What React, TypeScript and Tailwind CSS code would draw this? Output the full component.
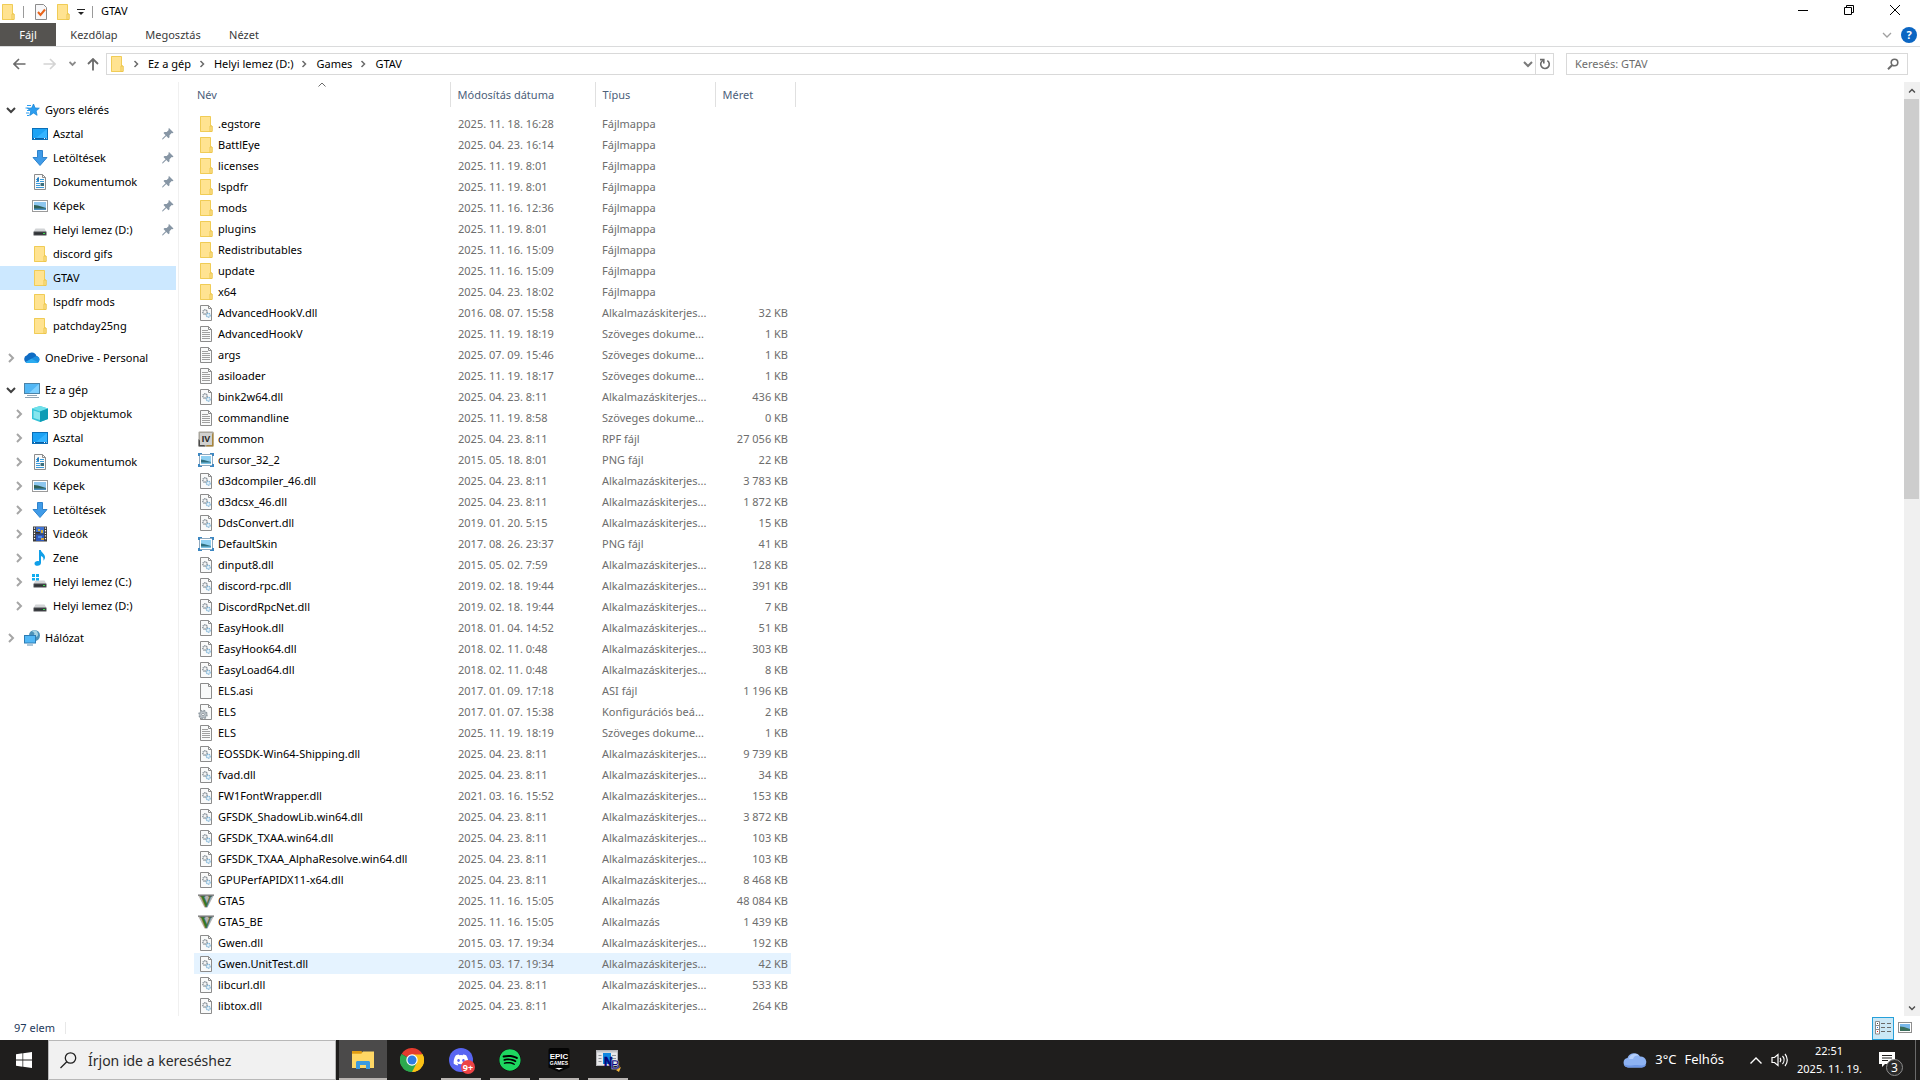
import type { ReactNode } from "react";
import { FaDiscord, FaSpotify } from "react-icons/fa";

type IconProps = { className?: string };

function FolderIcon({ className = "" }: IconProps) {
  return (
    <svg width="16" height="16" viewBox="0 0 16 16" className={className}>
      <path d="M2 0h10.5v16H2z" fill="#ffe391" />
      <path d="M2.5.5h10v9.5h1.500v5.500H2.500z" fill="none" stroke="#f0cc56" />
      <path d="M12 10h2v5.500h-2z" fill="#ffe69b" stroke="#edc64c" />
    </svg>
  );
}

function PageBase({ children }: { children?: ReactNode }) {
  return (
    <svg width="16" height="16" viewBox="0 0 16 16">
      <path d="M2.500.5h8l3 3v12h-11z" fill="#f9fafa" stroke="#8c8c8c" />
      <path d="M10.500.5v3h3" fill="none" stroke="#8c8c8c" />
      {children}
    </svg>
  );
}

function DllIcon() {
  return (
    <PageBase>
      <circle cx="7" cy="7" r="2.300" fill="#d3d7da" stroke="#8b949b" strokeWidth="1.300" strokeDasharray="1.200 .6" />
      <circle cx="7" cy="7" r=".9" fill="#fff" />
      <circle cx="10.300" cy="10.300" r="1.900" fill="#e3f0f8" stroke="#7fb3d6" strokeWidth="1.200" strokeDasharray="1.200 .5" />
    </PageBase>
  );
}

function TextFileIcon() {
  return (
    <PageBase>
      <path d="M4 4.500h6M4 6.500h8M4 8.500h8M4 10.500h8M4 12.500h8" stroke="#a0a0a0" />
    </PageBase>
  );
}

function ConfigIcon() {
  return (
    <svg width="16" height="16" viewBox="0 0 16 16">
      <path d="M2.500.5h8l3 3v12h-11z" fill="#f9fafa" stroke="#8c8c8c" />
      <path d="M10.500.5v3h3" fill="none" stroke="#8c8c8c" />
      <circle cx="5" cy="10.500" r="4" fill="#c3cacf" stroke="#8d979e" strokeWidth="1.500" strokeDasharray="1.700 1.440" />
      <circle cx="5" cy="10.500" r="3.200" fill="#c3cacf" stroke="#98a2a9" strokeWidth=".7" />
      <circle cx="5" cy="10.500" r="1.300" fill="#fff" stroke="#7f8990" strokeWidth=".8" />
    </svg>
  );
}

function RpfIcon() {
  return (
    <svg width="16" height="16" viewBox="0 0 16 16">
      <rect x="0.500" y="0.500" width="15" height="15" rx="1" fill="#a9a69d" />
      <path d="M15.500 1v14.500H8z" fill="#a8853c" />
      <path d="M.5 15.500V8l7 7.500z" fill="#4a4a4a" />
      <rect x="2" y="2" width="12" height="12" fill="#d0d0ce" />
      <text x="8" y="11" textAnchor="middle" fontSize="9" fontWeight="700" fill="#222" fontFamily="Liberation Sans, sans-serif">
        IV
      </text>
    </svg>
  );
}

function PngIcon() {
  return (
    <svg width="16" height="16" viewBox="0 0 16 16">
      <rect x="1.500" y="2.500" width="13" height="11" fill="#fff" stroke="#8fa9bf" />
      <rect x="3" y="4" width="10" height="8" fill="#8fd0f2" />
      <path d="M3 7.500l3 .5 7 2v1H3z" fill="#2f6f80" />
      <path d="M3 10.500h10V12H3z" fill="#7cc3e6" />
      <path d="M0 1h4v1H2v2H0zM12 1h4v3h-2V2h-2zM0 12h2v2h2v1H0zM14 12h2v3h-4v-1h2z" fill="#3c87c2" />
    </svg>
  );
}

function GtaIcon() {
  return (
    <svg width="16" height="16" viewBox="0 0 16 16">
      <path d="M0 2h16L9.500 14.500h-3z" fill="#b4b4b4" />
      <path d="M0 1.500h16v1.200H0z" fill="#6f6f6f" />
      <text x="8" y="14" textAnchor="middle" fontSize="16" fontWeight="700" fill="#2f7d1e" stroke="#5a5a5a" strokeWidth=".4" fontFamily="Liberation Serif, serif">
        V
      </text>
    </svg>
  );
}

function DesktopIcon() {
  return (
    <svg width="16" height="16" viewBox="0 0 16 16">
      <rect x="0.500" y="2.500" width="15" height="11" fill="#1da3f5" stroke="#0a6fb8" />
      <path d="M15 3v9L4 12z" fill="#35b4ff" />
      <path d="M1 12.500h14" stroke="#0b5fa5" />
      <path d="M2 12.500h1M12 12.500h1M14 12.500h.6" stroke="#fff" />
    </svg>
  );
}

function DownloadIcon() {
  return (
    <svg width="16" height="16" viewBox="0 0 16 16">
      <path d="M5.500.5h5v7h4.500L8 15.500 1 7.500h4.500z" fill="#3f9be8" stroke="#2f83cc" />
    </svg>
  );
}

function DocumentsIcon() {
  return (
    <PageBase>
      <path d="M4 5.500h3M4 7.500h3M8 5.500h4M8 7.500h4M4 9.500h4M4 11.500h4M4 13.500h8" stroke="#3b9bdc" />
      <path d="M5 4l2-1v4H5z" fill="#2a7fbe" />
      <path d="M8.500 9h3.500v3H8.500z" fill="#3d6f7d" />
    </PageBase>
  );
}

function PicturesIcon() {
  return (
    <svg width="16" height="16" viewBox="0 0 16 16">
      <rect x="0.500" y="2.500" width="15" height="11" fill="#fff" stroke="#9b9b9b" />
      <rect x="2" y="4" width="12" height="8" fill="#8ec7ef" />
      <path d="M2 7l4 .5 8 2.500v2H2z" fill="#2e6057" />
      <path d="M2 10.500l12 0V12H2z" fill="#4b8fc0" />
    </svg>
  );
}

function DriveIcon({ system = false }: { system?: boolean }) {
  return (
    <svg width="16" height="16" viewBox="0 0 16 16">
      <path d="M3.500 6.500h9l2 3.500h-13z" fill="#d2d4d6" />
      <rect x="1.500" y="9.500" width="13" height="4" rx="0.500" fill="#4a4d50" />
      <rect x="2.500" y="10.500" width="11" height="2" fill="#303336" />
      <rect x="11" y="11" width="2" height="1" fill="#39e04b" />
      {system && <path d="M0 0h3v3H0zM4 0h3v3H4zM0 4h3v2.500H0zM4 4h3v2.500H4z" fill="#12adef" />}
    </svg>
  );
}

function VideosIcon() {
  return (
    <svg width="16" height="16" viewBox="0 0 16 16">
      <rect x="1" y="0.500" width="14" height="15" fill="#3d3d3d" />
      <path d="M2.500 1.500v13M13.500 1.500v13" stroke="#fff" strokeWidth="1.200" strokeDasharray="1.300 1.300" />
      <rect x="4" y="1" width="8" height="6.500" fill="#3f72d2" />
      <path d="M6 3h2v2H6zM9 4h2v3H9z" fill="#d6b23a" />
      <path d="M4 6h4v1.500H4z" fill="#3a3020" />
      <rect x="4" y="8.500" width="8" height="6.500" fill="#2e57b8" />
      <path d="M6 10h4v2H6z" fill="#4f8ae6" />
      <path d="M9 12h3v2H9z" fill="#d5a13b" />
    </svg>
  );
}

function MusicIcon() {
  return (
    <svg width="16" height="16" viewBox="0 0 16 16">
      <path d="M7 0h1.800c.4 2.600 4.400 4 4.200 7.500-.1 1.400-.8 2.500-1.600 3.200.5-2.300-.3-3.900-2.400-4.700v6.800c0 1.800-1.400 3-3.400 3S2.500 14.900 2.500 13.500 4 11 5.600 11c.5 0 1 .1 1.400.300z" fill="#109fe8" />
    </svg>
  );
}

function CubeIcon() {
  return (
    <svg width="16" height="16" viewBox="0 0 16 16">
      <path d="M8 0l8 2.500v10.500L8 16 0 13V2.500z" fill="#35c3d8" />
      <path d="M0 2.500L8 0l8 2.500L8 5.500z" fill="#6fe0ea" />
      <path d="M8 5.500l8-3v10.500L8 16z" fill="#0d9cb5" />
      <path d="M1.500 4.500L8 6.500V14l-6.500-2z" fill="#86e6ee" />
    </svg>
  );
}

function PcIcon() {
  return (
    <svg width="16" height="16" viewBox="0 0 16 16">
      <rect x="0.500" y="1.500" width="15" height="10" fill="#52b7f5" stroke="#4b83a8" />
      <path d="M15 2v9H5z" fill="#7ed0ff" />
      <path d="M3 13.500h10M1 15.500h14" stroke="#8fa3b3" />
    </svg>
  );
}

function NetworkIcon() {
  return (
    <svg width="16" height="16" viewBox="0 0 16 16">
      <circle cx="10.500" cy="5.500" r="5.500" fill="#4d92b8" />
      <path d="M8 1.500c2 .5 3 2 2 3.500s2 2 3 1.500 1.500-3 0-5-4-1.500-5 0z" fill="#a8d4e4" />
      <rect x="0.500" y="5.500" width="11" height="7.500" fill="#52b7f5" stroke="#2d7cb4" />
      <path d="M3 15h6" stroke="#5b8fb3" />
    </svg>
  );
}

function OneDriveIcon() {
  return (
    <svg width="16" height="16" viewBox="0 0 16 16">
      <path d="M4 13a4 4 0 0 1-1-7.800A5.200 5.200 0 0 1 12.500 6 3.600 3.600 0 0 1 12.500 13z" fill="#0f6cc4" />
      <path d="M4 13l-2.500-1L9.500 7.500c1-.7 2.200-1.500 3.500-1.300a3.500 3.500 0 0 1 0 6.800z" fill="#1b8fe0" />
      <path d="M1.500 12l6-3.200 7 3.600c-.5.500-1 .6-2 .600H4c-1 0-2-.3-2.500-1z" fill="#2cacf0" />
    </svg>
  );
}

function QuickAccessIcon() {
  return (
    <svg width="16" height="16" viewBox="0 0 16 16">
      <path d="M9.500 2l1.600 4 4.200.2-3.200 2.800 1 4.300L9.500 11l-3.800 2.500 1-4.400L3.500 6.300l4.200-.3z" fill="#2b9df0" stroke="#1b86d6" strokeWidth=".8" />
      <path d="M3 3.500h4M1.500 6h3M3 8.500h3M2 11h3M3 13.500h2" stroke="#2b9df0" />
    </svg>
  );
}

function PinIcon() {
  return (
    <svg width="12" height="12" viewBox="0 0 12 12" className="mr-[2px] ml-auto">
      <path d="M7 0l4.500 4.500-1 .8-.8-.2L7.500 7.300l0 2-1 1L4.300 8 1 11.200 0 11.500l.5-1.200L3.600 7.200 1.500 5l1-1 2.200 0 2-2L6.400 1z" fill="#8796a5" />
    </svg>
  );
}

function Chevron({ dir, className = "" }: { dir: "right" | "down" | "up"; className?: string }) {
  const d = dir === "right" ? "M3 1l4 4-4 4" : dir === "down" ? "M1 3l4 4 4-4" : "M1 7l4-4 4 4";
  return (
    <svg width="10" height="10" viewBox="0 0 10 10" className={className}>
      <path d={d} fill="none" stroke="currentColor" strokeWidth="2" />
    </svg>
  );
}

type NavItem = { label: string; icon: ReactNode; pinned?: boolean; selected?: boolean };
type NavGroup = NavItem & { open: boolean; items: NavItem[]; expandable?: boolean };

const navGroups: NavGroup[] = [
  {
    label: "Gyors elérés",
    icon: <QuickAccessIcon />,
    open: true,
    items: [
      { label: "Asztal", icon: <DesktopIcon />, pinned: true },
      { label: "Letöltések", icon: <DownloadIcon />, pinned: true },
      { label: "Dokumentumok", icon: <DocumentsIcon />, pinned: true },
      { label: "Képek", icon: <PicturesIcon />, pinned: true },
      { label: "Helyi lemez (D:)", icon: <DriveIcon />, pinned: true },
      { label: "discord gifs", icon: <FolderIcon /> },
      { label: "GTAV", icon: <FolderIcon />, selected: true },
      { label: "lspdfr mods", icon: <FolderIcon /> },
      { label: "patchday25ng", icon: <FolderIcon /> },
    ],
  },
  { label: "OneDrive - Personal", icon: <OneDriveIcon />, open: false, items: [] },
  {
    label: "Ez a gép",
    icon: <PcIcon />,
    open: true,
    expandable: true,
    items: [
      { label: "3D objektumok", icon: <CubeIcon /> },
      { label: "Asztal", icon: <DesktopIcon /> },
      { label: "Dokumentumok", icon: <DocumentsIcon /> },
      { label: "Képek", icon: <PicturesIcon /> },
      { label: "Letöltések", icon: <DownloadIcon /> },
      { label: "Videók", icon: <VideosIcon /> },
      { label: "Zene", icon: <MusicIcon /> },
      { label: "Helyi lemez (C:)", icon: <DriveIcon system /> },
      { label: "Helyi lemez (D:)", icon: <DriveIcon /> },
    ],
  },
  { label: "Hálózat", icon: <NetworkIcon />, open: false, items: [] },
];

type Kind = "folder" | "dll" | "txt" | "rpf" | "png" | "asi" | "ini" | "exe";

const kinds: Record<Kind, { icon: ReactNode; type: string }> = {
  folder: { icon: <FolderIcon />, type: "Fájlmappa" },
  dll: { icon: <DllIcon />, type: "Alkalmazáskiterjes..." },
  txt: { icon: <TextFileIcon />, type: "Szöveges dokume..." },
  rpf: { icon: <RpfIcon />, type: "RPF fájl" },
  png: { icon: <PngIcon />, type: "PNG fájl" },
  asi: { icon: <PageBase />, type: "ASI fájl" },
  ini: { icon: <ConfigIcon />, type: "Konfigurációs beá..." },
  exe: { icon: <GtaIcon />, type: "Alkalmazás" },
};

const files: [string, string, Kind, string][] = [
  [".egstore", "2025. 11. 18. 16:28", "folder", ""],
  ["BattlEye", "2025. 04. 23. 16:14", "folder", ""],
  ["licenses", "2025. 11. 19. 8:01", "folder", ""],
  ["lspdfr", "2025. 11. 19. 8:01", "folder", ""],
  ["mods", "2025. 11. 16. 12:36", "folder", ""],
  ["plugins", "2025. 11. 19. 8:01", "folder", ""],
  ["Redistributables", "2025. 11. 16. 15:09", "folder", ""],
  ["update", "2025. 11. 16. 15:09", "folder", ""],
  ["x64", "2025. 04. 23. 18:02", "folder", ""],
  ["AdvancedHookV.dll", "2016. 08. 07. 15:58", "dll", "32 KB"],
  ["AdvancedHookV", "2025. 11. 19. 18:19", "txt", "1 KB"],
  ["args", "2025. 07. 09. 15:46", "txt", "1 KB"],
  ["asiloader", "2025. 11. 19. 18:17", "txt", "1 KB"],
  ["bink2w64.dll", "2025. 04. 23. 8:11", "dll", "436 KB"],
  ["commandline", "2025. 11. 19. 8:58", "txt", "0 KB"],
  ["common", "2025. 04. 23. 8:11", "rpf", "27 056 KB"],
  ["cursor_32_2", "2015. 05. 18. 8:01", "png", "22 KB"],
  ["d3dcompiler_46.dll", "2025. 04. 23. 8:11", "dll", "3 783 KB"],
  ["d3dcsx_46.dll", "2025. 04. 23. 8:11", "dll", "1 872 KB"],
  ["DdsConvert.dll", "2019. 01. 20. 5:15", "dll", "15 KB"],
  ["DefaultSkin", "2017. 08. 26. 23:37", "png", "41 KB"],
  ["dinput8.dll", "2015. 05. 02. 7:59", "dll", "128 KB"],
  ["discord-rpc.dll", "2019. 02. 18. 19:44", "dll", "391 KB"],
  ["DiscordRpcNet.dll", "2019. 02. 18. 19:44", "dll", "7 KB"],
  ["EasyHook.dll", "2018. 01. 04. 14:52", "dll", "51 KB"],
  ["EasyHook64.dll", "2018. 02. 11. 0:48", "dll", "303 KB"],
  ["EasyLoad64.dll", "2018. 02. 11. 0:48", "dll", "8 KB"],
  ["ELS.asi", "2017. 01. 09. 17:18", "asi", "1 196 KB"],
  ["ELS", "2017. 01. 07. 15:38", "ini", "2 KB"],
  ["ELS", "2025. 11. 19. 18:19", "txt", "1 KB"],
  ["EOSSDK-Win64-Shipping.dll", "2025. 04. 23. 8:11", "dll", "9 739 KB"],
  ["fvad.dll", "2025. 04. 23. 8:11", "dll", "34 KB"],
  ["FW1FontWrapper.dll", "2021. 03. 16. 15:52", "dll", "153 KB"],
  ["GFSDK_ShadowLib.win64.dll", "2025. 04. 23. 8:11", "dll", "3 872 KB"],
  ["GFSDK_TXAA.win64.dll", "2025. 04. 23. 8:11", "dll", "103 KB"],
  ["GFSDK_TXAA_AlphaResolve.win64.dll", "2025. 04. 23. 8:11", "dll", "103 KB"],
  ["GPUPerfAPIDX11-x64.dll", "2025. 04. 23. 8:11", "dll", "8 468 KB"],
  ["GTA5", "2025. 11. 16. 15:05", "exe", "48 084 KB"],
  ["GTA5_BE", "2025. 11. 16. 15:05", "exe", "1 439 KB"],
  ["Gwen.dll", "2015. 03. 17. 19:34", "dll", "192 KB"],
  ["Gwen.UnitTest.dll", "2015. 03. 17. 19:34", "dll", "42 KB"],
  ["libcurl.dll", "2025. 04. 23. 8:11", "dll", "533 KB"],
  ["libtox.dll", "2025. 04. 23. 8:11", "dll", "264 KB"],
];

function TitleBar() {
  return (
    <header className="flex h-[23px] shrink-0 items-start">
      <div className="flex h-[23px] items-center">
        <FolderIcon />
        <span className="ml-[7px] h-3 w-px bg-[#9a9a9a]" />
        <button aria-label="Tulajdonságok" className="ml-[9px]">
          <svg width="16" height="16" viewBox="0 0 16 16">
            <path d="M2.500.5h8l3 3v12h-11z" fill="#f7f7f9" stroke="#8c8c8c" />
            <path d="M5 8l2.500 3L12 5.500" fill="none" stroke="#e8641b" strokeWidth="2" />
          </svg>
        </button>
        <button aria-label="Új mappa" className="ml-[6px]">
          <FolderIcon />
        </button>
        <button aria-label="Gyorselérési eszköztár testreszabása" className="ml-[6px]">
          <svg width="8" height="8" viewBox="0 0 8 8">
            <path d="M0 1.500h8" stroke="#222" />
            <path d="M1 4h6L4 7z" fill="#222" />
          </svg>
        </button>
        <span className="ml-[7px] h-3 w-px bg-[#9a9a9a]" />
        <h1 className="ml-2 text-[11px]">GTAV</h1>
      </div>
      <div className="ml-auto flex h-[20px]">
        <button aria-label="Kis méret" className="grid w-[46px] place-items-center">
          <svg width="10" height="10" viewBox="0 0 10 10">
            <path d="M0 5.500h10" stroke="#000" />
          </svg>
        </button>
        <button aria-label="Előző méret" className="grid w-[46px] place-items-center">
          <svg width="10" height="10" viewBox="0 0 10 10" fill="none" stroke="#000">
            <path d="M.5 2.500h7v7h-7zM2.500 2.500v-2h7v7h-2" />
          </svg>
        </button>
        <button aria-label="Bezárás" className="mr-[2px] grid w-[46px] place-items-center">
          <svg width="10" height="10" viewBox="0 0 10 10" stroke="#000">
            <path d="M0 0l10 10M10 0L0 10" />
          </svg>
        </button>
      </div>
    </header>
  );
}

function RibbonTabs() {
  return (
    <nav className="flex h-6 shrink-0 border-b border-[#dadbdc] text-[11px] text-[#3b3b3b]">
      <button className="w-[56px] bg-[#555350] pt-px text-white">Fájl</button>
      <button className="w-[76px] pt-px">Kezdőlap</button>
      <button className="w-[82px] pt-px">Megosztás</button>
      <button className="w-[60px] pt-px">Nézet</button>
      <div className="ml-auto flex items-center pr-[3px]">
        <button aria-label="Menüszalag kibontása" className="mr-[9px] text-[#a0a0a0]">
          <svg width="10" height="10" viewBox="0 0 10 10" className="block">
            <path d="M1 3l4 4 4-4" fill="none" stroke="currentColor" strokeWidth="1.300" />
          </svg>
        </button>
        <button
          aria-label="Súgó"
          className="grid size-4 place-items-center rounded-full bg-[#0b66c3] text-[11px] leading-none font-bold text-white"
        >
          ?
        </button>
      </div>
    </nav>
  );
}

function AddressRow() {
  const crumbs = ["Ez a gép", "Helyi lemez (D:)", "Games", "GTAV"];
  return (
    <div className="flex h-[35px] shrink-0 items-start pt-[6px] pr-3">
      <div className="flex h-[22px] w-[106px] shrink-0 items-center">
        <button aria-label="Vissza" className="ml-[13px] text-[#6b6b6b]">
          <svg width="13" height="12" viewBox="0 0 13 12" className="block" fill="none" stroke="currentColor" strokeWidth="1.600">
            <path d="M12.500 6H1M6 1L1 6l5 5" />
          </svg>
        </button>
        <button aria-label="Előre" className="ml-[17px] text-[#d4d4d4]">
          <svg width="13" height="12" viewBox="0 0 13 12" className="block" fill="none" stroke="currentColor" strokeWidth="1.600">
            <path d="M.5 6H12M7 1l5 5-5 5" />
          </svg>
        </button>
        <button aria-label="Legutóbbi helyek" className="ml-[13px] text-[#8a8a8a]">
          <svg width="7" height="6" viewBox="0 0 7 6" className="block">
            <path d="M.5 1l3 3 3-3" fill="none" stroke="currentColor" strokeWidth="1.800" />
          </svg>
        </button>
        <button aria-label="Fel" className="ml-[11px] text-[#6b6b6b]">
          <svg width="12" height="13" viewBox="0 0 12 13" className="block" fill="none" stroke="currentColor" strokeWidth="1.800">
            <path d="M6 12.500V1.500M1 6l5-5 5 5" />
          </svg>
        </button>
      </div>
      <div className="flex h-[22px] min-w-0 flex-1 items-center border border-[#d9d9d9]">
        <FolderIcon className="ml-[2px] shrink-0" />
        {crumbs.map((crumb) => (
          <div key={crumb} className="flex items-center">
            <Chevron dir="right" className="mr-[7px] ml-[6px] scale-75 text-[#6b6b6b]" />
            <button className="text-[11px]">{crumb}</button>
          </div>
        ))}
        <button aria-label="Előzmények" className="mr-[2px] ml-auto text-[#7a7a7a]">
          <Chevron dir="down" className="block" />
        </button>
        <button aria-label="Frissítés" className="grid h-full w-[18px] place-items-center border-l border-[#d9d9d9] text-[#6b6b6b]">
          <svg width="12" height="12" viewBox="0 0 12 12" fill="none" stroke="currentColor" strokeWidth="1.600">
            <path d="M8.300 2.600A4.300 4.300 0 1 1 4 2.400" />
            <path d="M1 1.600h3.800v3.800" />
          </svg>
        </button>
      </div>
      <label className="ml-3 flex h-[22px] w-[342px] shrink-0 items-center border border-[#d9d9d9] pr-2 pl-2">
        <input
          type="text"
          aria-label="Keresés"
          placeholder="Keresés: GTAV"
          className="min-w-0 flex-1 text-[11px] outline-none placeholder:text-[#6d6d6d]"
        />
        <svg width="12" height="12" viewBox="0 0 12 12" fill="none" stroke="#6b6b6b">
          <circle cx="7.500" cy="4.500" r="3.300" strokeWidth="1.600" />
          <path d="M5.200 7L1 11.200" strokeWidth="2" />
        </svg>
      </label>
    </div>
  );
}

function Sidebar() {
  return (
    <aside className="flex w-[179px] shrink-0 flex-col gap-2 overflow-hidden border-r border-[#f0f0f0] pt-4 text-[11px]">
      {navGroups.map((group) => (
        <div key={group.label}>
          <a href="#" className="flex h-6 items-center pl-[6px]">
            <Chevron
              dir={group.open ? "down" : "right"}
              className={group.open ? "text-[#404040]" : "text-[#a6a6a6]"}
            />
            <span className="mr-[5px] ml-2">{group.icon}</span>
            <span className="whitespace-nowrap">{group.label}</span>
          </a>
          {group.items.map((item) => (
            <a
              key={item.label}
              href="#"
              className={`mr-[2px] flex h-6 items-center pl-[14px] ${item.selected ? "bg-[#cce8ff]" : ""}`}
            >
              <span className="w-[10px]">
                {group.expandable && <Chevron dir="right" className="text-[#a6a6a6]" />}
              </span>
              <span className="mr-[5px] ml-2">{item.icon}</span>
              <span className="whitespace-nowrap">{item.label}</span>
              {item.pinned && <PinIcon />}
            </a>
          ))}
        </div>
      ))}
    </aside>
  );
}

function FileTable() {
  const th = "h-[25px] border-r border-[#e0e0e0] pl-[7px] text-left font-normal text-[#4c607a]";
  return (
    <table className="ml-[15px] w-[601px] table-fixed border-collapse self-start text-[11px] leading-[21px]">
      <colgroup>
        <col className="w-[256px]" />
        <col className="w-[145px]" />
        <col className="w-[120px]" />
        <col className="w-[76px]" />
        <col className="w-[4px]" />
      </colgroup>
      <thead>
        <tr>
          <th className="relative h-[25px] border-r border-[#e0e0e0] pl-[3px] text-left font-normal text-[#4c607a]">
            Név
            <svg width="8" height="5" viewBox="0 0 8 5" className="absolute inset-x-0 top-0 mx-auto">
              <path d="M.5 4.500L4 1l3.500 3.500" fill="none" stroke="#6b6b6b" />
            </svg>
          </th>
          <th className={th}>Módosítás dátuma</th>
          <th className={th}>Típus</th>
          <th className={th} colSpan={2}>
            Méret
          </th>
        </tr>
      </thead>
      <tbody className="text-[#6d6d6d] before:block before:h-[6px]">
        {files.map(([name, date, kind, size]) => (
          <tr key={name + kind} className={name === "Gwen.UnitTest.dll" ? "*:bg-[#e5f3ff]" : ""}>
            <td className="h-[21px] p-0 text-black">
              <div className="flex items-center pl-1">
                <span className="mr-1">{kinds[kind].icon}</span>
                {name}
              </div>
            </td>
            <td className="p-0 pl-2">{date}</td>
            <td className="p-0 pl-[7px] whitespace-nowrap">{kinds[kind].type}</td>
            <td className="p-0 pr-[3px] text-right whitespace-nowrap">{size}</td>
          </tr>
        ))}
      </tbody>
    </table>
  );
}

function Scrollbar() {
  return (
    <div className="ml-auto flex w-4 shrink-0 flex-col bg-[#f0f0f0] text-[#505050]">
      <button aria-label="Görgetés felfelé" className="grid h-[17px] place-items-center">
        <Chevron dir="up" className="scale-75" />
      </button>
      <div className="mr-px h-3/7 bg-[#cdcdcd]" />
      <button aria-label="Görgetés lefelé" className="mt-auto grid h-[17px] place-items-center">
        <Chevron dir="down" className="scale-75" />
      </button>
    </div>
  );
}

function StatusBar() {
  return (
    <footer className="flex h-6 shrink-0 items-center text-[11px] text-[#1e395b]">
      <span className="ml-[14px]">97 elem</span>
      <span className="ml-[10px] h-3 w-px bg-[#e8e8e8]" />
      <button aria-label="Részletek" className="ml-auto grid h-[23px] w-[22px] place-items-center border border-[#26a0da] bg-[#cbe8f6]">
        <svg width="16" height="14" viewBox="0 0 16 14">
          <path d="M.5.5h4v12.500h-4zM.5 4.500h4M.5 8.500h4" fill="#fff" stroke="#8a8a8a" />
          <path d="M6 2.500h4M12 2.500h4M6 6.500h4M12 6.500h4M6 10.500h4M12 10.500h4" stroke="#6b6b6b" />
          <path d="M2 2h1v1H2z" fill="#444" />
          <path d="M2 6h1v1H2z" fill="#2a6fd6" />
          <path d="M2 10h1v1H2z" fill="#d22" />
        </svg>
      </button>
      <button aria-label="Nagy ikonok" className="mr-[8px] ml-1">
        <svg width="14" height="12" viewBox="0 0 14 12" className="block">
          <rect x="0.500" y="0.500" width="13" height="10" fill="#fff" stroke="#8f8f8f" />
          <rect x="2" y="2" width="10" height="7" fill="#7ab8ea" />
          <path d="M2 4.500l4 .5 6 2v2H2z" fill="#3b6f5c" />
        </svg>
      </button>
    </footer>
  );
}

function ChromeIcon() {
  return (
    <svg width="24" height="24" viewBox="0 0 24 24">
      <path d="M12 12L1.600 6A12 12 0 0 1 22.400 6z" fill="#e33b2e" />
      <path d="M12 12L22.400 6A12 12 0 0 1 12 24z" fill="#fbc116" />
      <path d="M12 12L12 24A12 12 0 0 1 1.600 6z" fill="#2da94f" />
      <path d="M12 6.500h10.650A12 12 0 0 1 12 24l4.800-9.200z" fill="#fbc116" />
      <path d="M1.600 6L6.900 15l5.100 3L12 24A12 12 0 0 1 1.600 6z" fill="#2da94f" />
      <path d="M12 24l4.800-9.200-6 2z" fill="#2da94f" />
      <circle cx="12" cy="12" r="5.700" fill="#fff" />
      <circle cx="12" cy="12" r="4.500" fill="#2f7de1" />
    </svg>
  );
}

function ExplorerIcon() {
  return (
    <svg width="22" height="20" viewBox="0 0 22 20">
      <path d="M0 2.500h10l1-1h11V18H0z" fill="#ffd765" />
      <path d="M0 1h9.500l.8 1.500-1 1.300H0z" fill="#e09c12" />
      <path d="M4 19v-6.500c0-1 .7-1.500 1.500-1.500h11c.8 0 1.500.5 1.500 1.500V19h-4v-4H8v4z" fill="#3b9ae0" />
    </svg>
  );
}

function EpicIcon() {
  return (
    <svg width="22" height="24" viewBox="0 0 22 24">
      <path d="M2.500 0h17a2 2 0 0 1 2 2v17.500L11 24 .5 19.500V2a2 2 0 0 1 2-2z" fill="#050505" />
      <text x="11" y="11" textAnchor="middle" fontSize="8" fontWeight="700" fill="#fff" fontFamily="Liberation Sans Narrow, Liberation Sans, sans-serif">
        EPIC
      </text>
      <text x="11" y="17" textAnchor="middle" fontSize="5" fontWeight="700" fill="#fff" fontFamily="Liberation Sans Narrow, Liberation Sans, sans-serif">
        GAMES
      </text>
      <path d="M7 20h8l-4 1.800z" fill="#fff" />
    </svg>
  );
}

function NbIcon() {
  return (
    <svg width="26" height="24" viewBox="0 0 26 24">
      <rect x="1.500" y="2.500" width="21" height="15" fill="#e8e8ea" stroke="#b5b5b8" />
      <path d="M2 3h20v1.500H2z" fill="#c4c6c9" />
      <path d="M3.500 7.500h3M3.500 10.500h3M3.500 13.500h3M17 7.500h4M17 10.500h4" stroke="#8f9499" />
      <rect x="8" y="5" width="8" height="11" fill="#0f86e0" />
      <text x="9" y="18" fontSize="12" fontWeight="700" fill="#05057c" stroke="#05057c" strokeWidth=".6" fontFamily="Liberation Sans, sans-serif">
        N
      </text>
      <text x="16" y="21" fontSize="12" fontWeight="700" fill="#05057c" stroke="#e8e8ea" strokeWidth=".4" fontFamily="Liberation Sans, sans-serif">
        B
      </text>
      <path d="M21 22l5-3-2 5z" fill="#f3b63a" />
    </svg>
  );
}

const apps: { label: string; icon: ReactNode; running?: boolean; active?: boolean }[] = [
  { label: "Fájlkezelő", icon: <ExplorerIcon />, active: true },
  { label: "Google Chrome", icon: <ChromeIcon /> },
  {
    label: "Discord",
    running: true,
    icon: (
      <span className="relative grid size-6 place-items-center rounded-full bg-[#5865f2] text-white">
        <FaDiscord size={16} />
        <span className="absolute -right-[2px] -bottom-[2px] grid size-[14px] place-items-center rounded-full bg-[#ed4245] text-[9px] leading-none font-bold">
          9+
        </span>
      </span>
    ),
  },
  {
    label: "Spotify",
    running: true,
    icon: (
      <span className="rounded-full bg-black text-[#1ed760]">
        <FaSpotify size={22} />
      </span>
    ),
  },
  { label: "Epic Games", icon: <EpicIcon />, running: true },
  { label: "NB", icon: <NbIcon />, running: true },
];

function Taskbar() {
  return (
    <div className="flex h-10 shrink-0 bg-[#1f1e1d] text-white">
      <button aria-label="Start" className="grid w-12 place-items-center">
        <svg width="16" height="16" viewBox="0 0 16 16" fill="#fff">
          <path d="M0 2.200l6.500-.9v6.300H0zM7.200 1.200L16 0v7.600H7.200zM0 8.400h6.500v6.300L0 13.800zM7.200 8.400H16V16l-8.800-1.200z" />
        </svg>
      </button>
      <label className="flex w-[288px] items-center border border-[#b8b8b8] bg-[#f1f1f1] pl-[11px]">
        <svg width="17" height="17" viewBox="0 0 17 17" fill="none" stroke="#222" strokeWidth="1.300">
          <circle cx="10.500" cy="6" r="5.200" />
          <path d="M6.800 9.800L.5 16" />
        </svg>
        <input
          type="text"
          aria-label="Keresés a gépen"
          placeholder="Írjon ide a kereséshez"
          className="ml-[11px] min-w-0 flex-1 text-[14px] outline-none placeholder:text-[#2b2b2b]"
        />
      </label>
      <div className="ml-[3px] flex gap-px">
        {apps.map((app) => (
          <button
            key={app.label}
            aria-label={app.label}
            className={`relative grid w-12 place-items-center ${app.active ? "bg-[#4b4a4a]" : ""}`}
          >
            {app.icon}
            {app.active && <span className="absolute inset-x-0 bottom-0 h-[2px] bg-[#b9b5b2]" />}
            {app.running && <span className="absolute inset-x-1 bottom-0 h-[2px] bg-[#b9b5b2]" />}
          </button>
        ))}
      </div>
      <div className="ml-auto flex items-center">
        <button className="flex items-center text-[13px]">
          <svg width="24" height="16" viewBox="0 0 24 16">
            <path d="M5 15.500A4.800 4.800 0 0 1 4.500 6 7 7 0 0 1 17 4.500a5.600 5.600 0 0 1 2 11z" fill="#8db2f2" />
            <path d="M6 7a6 6 0 0 1 10-3.500c-3-.5-5 .5-6 3.500z" fill="#b5cffa" />
            <path d="M1 12.500c1 2 2.500 3 4.500 3H19c2 0 3.500-1 4.200-3-3 1.500-6 1-9 .500s-8 1.500-13.200-.500z" fill="#6e97e6" />
          </svg>
          <span className="ml-2">3°C</span>
          <span className="ml-2">Felhős</span>
        </button>
        <button aria-label="Rejtett ikonok megjelenítése" className="ml-[26px]">
          <svg width="12" height="7" viewBox="0 0 12 7" className="block">
            <path d="M.5 6.500L6 1l5.500 5.500" fill="none" stroke="#fff" strokeWidth="1.400" />
          </svg>
        </button>
        <button aria-label="Hangerő" className="ml-[9px]">
          <svg width="18" height="16" viewBox="0 0 18 16" fill="none" stroke="#fff" className="block">
            <path d="M1 5.500h2.500L7 2.500v11l-3.500-3H1z" strokeWidth="1.200" />
            <path d="M9 6c1 1.200 1 2.800 0 4M11.500 4c2 2.300 2 5.700 0 8M14 2c3 3.500 3 8.500 0 12" strokeWidth="1.200" />
          </svg>
        </button>
        <button className="ml-2 w-16 text-center text-[11px] leading-[18px] whitespace-nowrap">
          22:51
          <br />
          2025. 11. 19.
        </button>
        <button aria-label="Értesítések" className="relative ml-[18px] h-10 w-[36px]">
          <svg width="16" height="16" viewBox="0 0 16 16" className="block">
            <path d="M0 0h16v12H6l-3 3v-3H0z" fill="#fff" />
            <path d="M3 3.500h10M3 6h10M3 8.500h6" stroke="#1f1e1d" />
          </svg>
          <span className="absolute top-[19px] left-[7px] grid size-[17px] place-items-center rounded-full border border-[#8d8d8d] bg-[#2a2a2a] text-[12px] leading-none">
            3
          </span>
        </button>
        <span className="mr-1 h-10 w-px bg-[#6a6a6a]" />
      </div>
    </div>
  );
}

export default function App() {
  return (
    <div className="flex h-screen flex-col overflow-hidden bg-white font-['Noto_Sans','Open_Sans',sans-serif] text-black">
      <TitleBar />
      <RibbonTabs />
      <AddressRow />
      <main className="flex min-h-0 flex-1 overflow-hidden">
        <Sidebar />
        <FileTable />
        <Scrollbar />
      </main>
      <StatusBar />
      <Taskbar />
    </div>
  );
}
